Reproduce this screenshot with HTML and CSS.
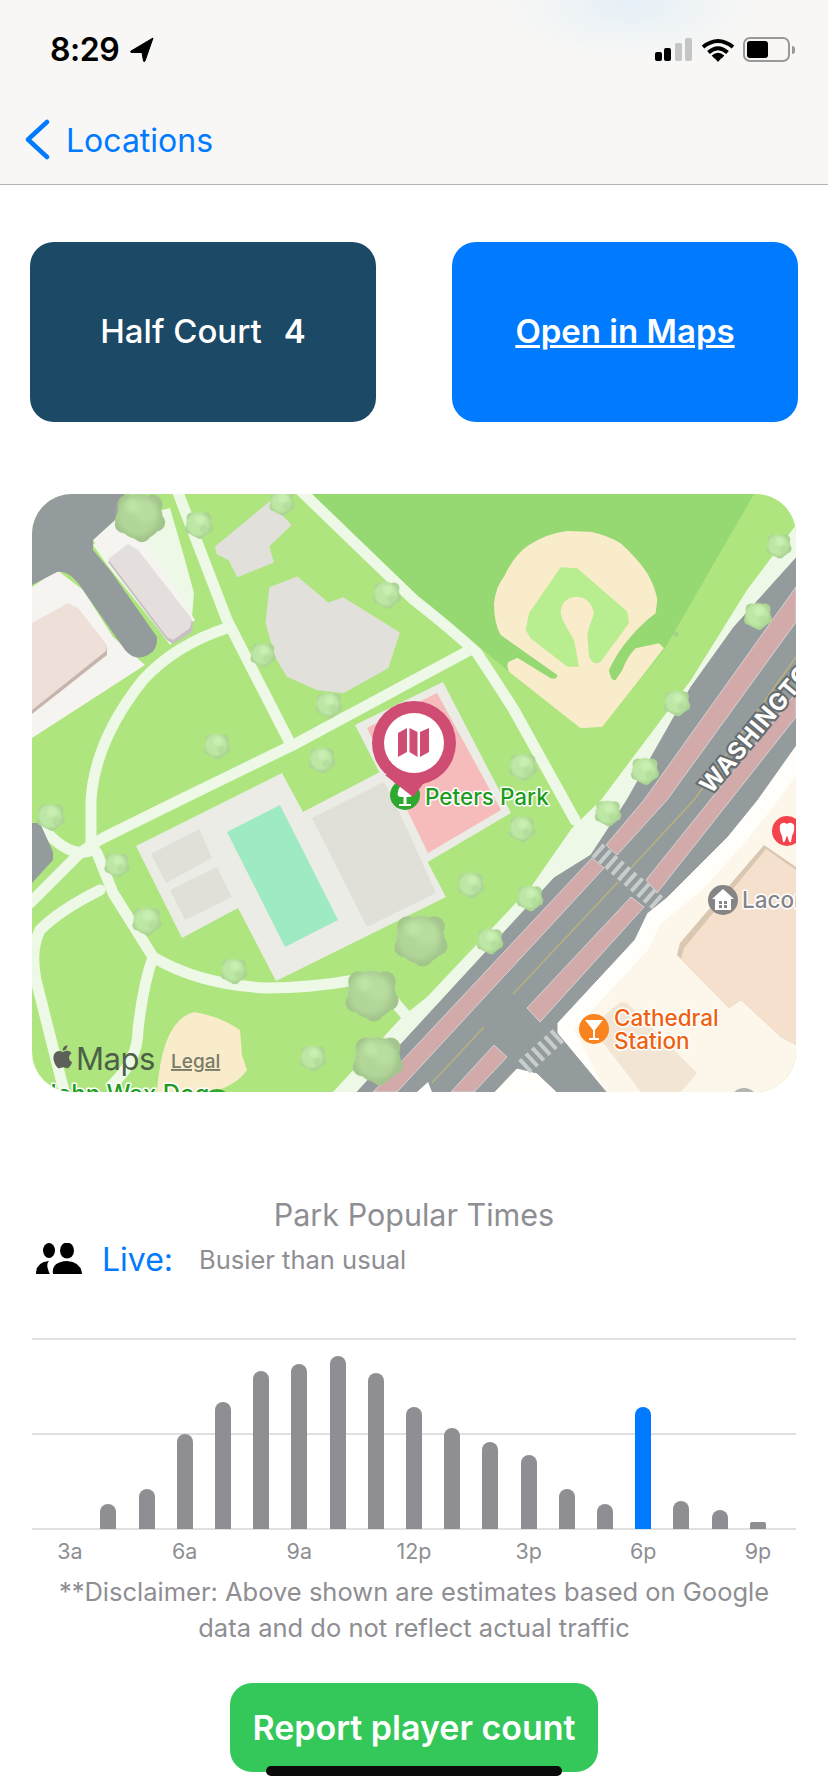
FILE: index.html
```html
<!DOCTYPE html>
<html>
	<head>
		<meta charset="UTF-8">
		<title>Peters Park</title>
		<link rel="stylesheet" href="styles.css">
	</head>
	<body>
		<div class="header">
			<div class="status">
				<span class="time">8:29</span>
				<svg class="arrow" width="26" height="26" viewBox="0 0 26 26"><path d="M24 1 L2 14 Q1 15.500 3 15.500 L13 15.500 L14.500 24 Q15 25.500 16 24 Z" fill="#000" stroke="#000" stroke-width="1" stroke-linejoin="round"/></svg>
				<div class="status-right">
					<svg width="38" height="24" viewBox="0 0 38 24">
						<rect x="0" y="14" width="7" height="9" rx="2" fill="#000"/>
						<rect x="9" y="10" width="7" height="13" rx="2" fill="#000"/>
						<rect x="20" y="5" width="7" height="18" rx="2" fill="#c3c5c6"/>
						<rect x="30" y="0" width="7" height="23" rx="2" fill="#c3c5c6"/>
					</svg>
					<svg width="34" height="25" viewBox="0 0 34 25" fill="none" stroke="#000" stroke-width="4">
						<path d="M2 9 Q17 -3 32 9"/>
						<path d="M7.500 14.500 Q17 6 26.500 14.500"/>
						<path d="M12 19 Q17 14.500 22 19"/>
						<path d="M17 24 L13.500 20 Q17 17.500 20.500 20 Z" fill="#000" stroke="none"/>
					</svg>
					<div class="battery"><div class="battery-fill"></div></div>
				</div>
			</div>
			<div class="nav">
				<svg width="28" height="42" viewBox="0 0 28 42"><path d="M23 3 L4 20.500 L23 38" fill="none" stroke="#007aff" stroke-width="4.500" stroke-linecap="round" stroke-linejoin="round"/></svg>
				<span class="nav-text">Locations</span>
			</div>
		</div>

		<div class="actions">
			<a class="btn btn-dark" href="#">Half Court<span class="count">4</span></a>
			<a class="btn btn-blue" href="#">Open in Maps</a>
		</div>

		<div class="map">
			<svg width="764" height="598" viewBox="32 494 764 598">
				<defs>
					<filter id="soft" x="-20%" y="-20%" width="140%" height="140%"><feGaussianBlur stdDeviation="1.300"/></filter>
					<g id="tree">
						<circle r="12.500" fill="#abd493"/>
						<circle cx="-7" cy="-7" r="5.500" fill="#abd493"/>
						<circle cx="7" cy="-7" r="5.500" fill="#abd493"/>
						<circle cx="9" cy="3" r="5" fill="#abd493"/>
						<circle cx="-9" cy="4" r="5" fill="#abd493"/>
						<circle cx="1" cy="9" r="5" fill="#abd493"/>
						<g filter="url(#soft)">
							<circle cx="-1" cy="-1" r="11.500" fill="#bde7a5"/>
							<circle cx="1" cy="-5" r="5" fill="#c9efb2"/>
							<circle cx="5" cy="4" r="4.500" fill="#b4de9c"/>
						</g>
					</g>
					<g id="tree-big">
						<circle r="12.500" fill="#a3c58d"/>
						<circle cx="-7" cy="-7" r="5.500" fill="#a3c58d"/>
						<circle cx="7" cy="-7" r="5.500" fill="#a3c58d"/>
						<circle cx="9" cy="3" r="5" fill="#a3c58d"/>
						<circle cx="-9" cy="4" r="5" fill="#a3c58d"/>
						<circle cx="1" cy="9" r="5" fill="#a3c58d"/>
						<g filter="url(#soft)">
							<circle cx="-1" cy="-1" r="11.500" fill="#b1d698"/>
							<circle cx="3" cy="-3" r="6" fill="#b7dd9f"/>
							<circle cx="-4" cy="-6" r="4" fill="#bde3a5"/>
						</g>
					</g>
				</defs>

				<rect x="32" y="494" width="764" height="598" fill="#aee57f"/>
				<polygon points="308,494 754,494 664,650 601,725 581,725 507,670 414,592" fill="#96d872"/>

				<!-- lot top left -->
				<polygon points="93,545 115,522 170,508 183,553 194,593 192,617 167,640 107,565" fill="#eef8e7"/>
				<polygon points="32,587 57,570 83,590 113,637 145,665 32,738" fill="#f6f4f0"/>
				<polygon points="93,540 115,520 140,535 195,620 170,645" fill="#f6f4f0"/>
				<path d="M32,494 H125 L115,520 L93,540 V550 L110,570 L157,637 Q158,650 148,655 Q135,662 125,650 L113,633 L83,590 Q70,570 57,572 L32,585 Z" fill="#949b9c"/>
				<polygon points="108,562 128,546 138,552 193,622 192,632 173,644 167,640" fill="#c8bfc0"/>
				<polygon points="108,559 128,544 138,550 192,619 190,628 173,640 167,637" fill="#e4dfdc"/>
				<polygon points="32,626 68,605 78,610 107,648 107,655 32,714" fill="#c5b5ad"/>
				<polygon points="32,623 68,603 78,608 107,645 106,651 32,710" fill="#eee0d9"/>

				<!-- paths -->
				<g fill="none" stroke="#eef8e7" stroke-width="11" stroke-linecap="round" stroke-linejoin="round">
					<path d="M177,490 L227,620 L290,743"/>
					<path d="M300,490 L414,600 Q450,628 477,653 Q495,680 514,710 L575,820"/>
					<path d="M470,650 L414,680 L297,743 L180,800 L105,837 Q90,845 78,855 L30,903"/>
					<path d="M91,845 L91,800 Q95,740 143,680 Q175,645 227,628"/>
					<path d="M91,845 L97,853 L113,893 L153,957 Q200,985 267,988 Q310,988 355,980"/>
					<path d="M93,850 Q70,860 43,828"/>
					<path d="M100,890 Q60,910 40,930 Q30,950 36,980 L65,1095"/>
					<path d="M153,957 Q143,985 138,1030 Q138,1060 112,1085"/>
					<path d="M380,985 L410,1020"/>
				</g>
				<polygon points="32,823 40,823 53,852 53,860 32,883" fill="#949b9c"/>

				<!-- buildings in the park -->
				<g transform="scale(.3333) translate(0 1440)" fill="#e2e0da">
					<polygon points="645,200 808,65 875,135 808,200 822,248 712,292 685,240 650,222"/>
					<polygon points="808,322 892,290 985,368 1030,352 1200,458 1165,565 1030,640 950,630 860,590 825,530 797,430"/>
				</g>
				<polygon points="136,846 282,773 303,812 380,772 446,897 276,981 238,908 182,938" fill="#ecece6"/>
				<polygon points="151,854 199,829 212,858 166,883" fill="#e0e0d8"/>
				<polygon points="170,890 217,867 232,897 185,920" fill="#e0e0d8"/>
				<polygon points="312,818 385,781 436,893 367,927" fill="#e0e0d8"/>
				<polygon points="227,832 280,805 338,920 285,947" fill="#9eeac2"/>
				<polygon points="355,725 443,682 511,813 426,863" fill="#ecece6"/>
				<polygon points="367,728 437,693 501,810 428,853" fill="#f6bcbc"/>
				<path d="M190,1092 Q195,1020 227,1012 Q250,1015 273,1030 L275,1055 L280,1070 Q270,1085 245,1092 Z" fill="#f9ecca" transform="translate(-33 0)"/>

				<!-- ball field -->
				<g transform="translate(414 480) scale(.3333)">
					<path d="M240,370 Q245,320 270,290 Q300,225 345,195 Q400,160 460,153 L530,155 Q580,165 620,190 Q670,235 700,280 Q725,325 730,360 L725,400 Q690,425 650,470 Q610,515 585,570 Q590,605 605,600 L625,570 Q640,530 665,505 L735,490 L750,505 L565,740 L500,745 L285,575 Q275,555 285,545 L310,533 L410,595 Q430,600 430,585 L260,465 Q240,430 240,370 Z" fill="#f9ecca"/>
					<path d="M440,262 L490,265 L640,395 L645,430 L560,545 Q540,560 525,530 L520,460 L540,400 Q530,350 485,350 Q440,355 440,400 Q445,425 480,480 L495,560 L460,560 L350,475 L335,450 L345,400 Z" fill="#b8ee90"/>
				</g>

				<!-- lot right of the road -->
				<polygon points="830,700 757,800 727,837 691,877 667,897 647,913 634,940 557,1023 557,1033 606,1130 830,1130" fill="#fcf7ea" stroke="#fffefa" stroke-width="34" stroke-linejoin="round"/>
				<polygon points="764,845 796,867 796,1045 781,1037 741,1000 729,1008 677,955 680,943" fill="#d9c7b2"/>
				<polygon points="766,849 796,870 796,1045 781,1037 741,1000 729,1008 681,959 684,948" fill="#f4e0cc"/>
				<polygon points="591,1027 621,1002 627,1003 697,1073 681,1092 641,1092" fill="#f3e5d3"/>
				<path d="M494,1092 L517,1068 L537,1073 L557,1092 Z" fill="#fffefa"/>

				<!-- road -->
				<polygon points="796,525 747,590 691,680 601,800 572,828 531,887 427,997 402,1017 333,1092 400,1092 796,600" fill="#eef8e7"/>
				<polygon points="796,558 734,627 691,687 627,800 591,855 554,878 414,1030 357,1092 494,1092 517,1068 537,1073 557,1092 606,1092 557,1033 557,1023 634,940 647,913 667,897 727,837 757,800 796,745" fill="#949b9c" stroke="#949b9c" stroke-linejoin="round"/>
				<g fill="#d2aaa9" stroke="#d4d4d4" stroke-width="1">
					<polygon points="796,587 796,622 667,800 617,855 606,845 644,800"/>
					<polygon points="592,858 604,868 397,1092 373,1092"/>
					<polygon points="796,693 796,717 657,893 646,880"/>
					<polygon points="631,897 644,907 540,1022 527,1008"/>
					<polygon points="494,1045 507,1057 474,1092 451,1092"/>
				</g>
				<g fill="none" stroke="#b9b27a" stroke-width="1.500">
					<path d="M796,657 L694,800 L631,868"/>
					<path d="M618,882 L513,994"/>
					<path d="M484,1027 L432,1083"/>
				</g>
				<path d="M597,850 L660,905" fill="none" stroke="#c9cccc" stroke-width="17" stroke-dasharray="4 4.500"/>
				<path d="M524,1067 L559,1035" fill="none" stroke="#c9cccc" stroke-width="17" stroke-dasharray="4 4.500"/>
				<polygon points="417,1092 428,1082 432,1092" fill="#fff"/>
				<text class="road-name" transform="translate(711 795) rotate(-50)">WASHINGTON</text>

				<!-- trees -->
				<use href="#tree-big" transform="translate(140 517) scale(1.800)"/>
				<use href="#tree" transform="translate(199 525)"/>
				<use href="#tree" transform="translate(282 503) scale(.9)"/>
				<use href="#tree" transform="translate(387 595)"/>
				<use href="#tree" transform="translate(263 655) scale(.9)"/>
				<use href="#tree" transform="translate(329 705) scale(.95)"/>
				<use href="#tree" transform="translate(217 746) scale(.95)"/>
				<use href="#tree" transform="translate(322 760) scale(.95)"/>
				<use href="#tree" transform="translate(779 546) scale(.9)"/>
				<use href="#tree" transform="translate(758 616)"/>
				<use href="#tree" transform="translate(677 703) scale(.95)"/>
				<use href="#tree" transform="translate(645 771)"/>
				<use href="#tree" transform="translate(523 767)"/>
				<use href="#tree" transform="translate(51 817)"/>
				<use href="#tree" transform="translate(117 865) scale(.9)"/>
				<use href="#tree" transform="translate(147 921) scale(1.050)"/>
				<use href="#tree" transform="translate(234 971) scale(.95)"/>
				<use href="#tree" transform="translate(313 1058) scale(.95)"/>
				<use href="#tree" transform="translate(608 813) scale(.95)"/>
				<use href="#tree" transform="translate(522 829) scale(.95)"/>
				<use href="#tree" transform="translate(471 885) scale(.95)"/>
				<use href="#tree" transform="translate(530 898) scale(.95)"/>
				<use href="#tree" transform="translate(490 941) scale(.95)"/>
				<use href="#tree-big" transform="translate(372 995) scale(1.900)"/>
				<use href="#tree-big" transform="translate(378 1060) scale(1.800)"/>
				<use href="#tree-big" transform="translate(421 940) scale(1.900)"/>
				<circle cx="676" cy="634" r="2.500" fill="#a7d08e"/>

				<!-- places -->
				<circle cx="405" cy="795" r="15" fill="#2ea82e"/>
				<path d="M405,785 Q412,786 412,792 Q414,797 408,797 L406.500,797 V804 H411 V806 H399 V804 H403.500 V797 H402 Q396,797 398,792 Q398,786 405,785 Z" fill="#fff"/>
				<text class="label label-green" x="425" y="805">Peters Park</text>

				<circle cx="594" cy="1029" r="15" fill="#f9831f"/>
				<path d="M585,1020 H603 L595,1030 V1038 H599 V1040 H589 V1038 H593 V1030 Z" fill="#fff"/>
				<text class="label label-orange" x="614" y="1026">Cathedral</text>
				<text class="label label-orange" x="614" y="1049">Station</text>

				<circle cx="723" cy="900" r="15" fill="#858585"/>
				<path d="M723,889 L734,899 H731 V910 H715 V899 H712 Z" fill="#fff"/>
				<path d="M719,901 h3 v3 h-3 z M724,901 h3 v3 h-3 z M719,905 h3 v3 h-3 z M724,905 h3 v3 h-3 z" fill="#858585"/>
				<text class="label label-gray" x="742" y="908">Laconia</text>

				<circle cx="787" cy="831" r="15" fill="#f4434d"/>
				<path d="M780,825 Q783,821 787,824 Q791,821 794,825 Q795,831 792,836 L791,842 Q789,843 788,838 Q787,834 786,838 Q785,843 783,842 L782,836 Q779,831 780,825 Z" fill="#fff"/>
				<circle cx="744" cy="1102" r="14" fill="#b5b5b5"/>

				<!-- clipped by the bottom edge -->
				<text class="label label-green label-big" x="43" y="1102">John Wax Dog</text>
				<circle cx="217" cy="1103" r="14" fill="#2ea82e"/>

				<!-- picked place -->
				<path d="M385,775 L413,797 L430,775 Z" fill="#cf4d72"/>
				<circle cx="414" cy="743" r="42" fill="#cf4d72"/>
				<circle cx="414" cy="743" r="30" fill="#fff"/>
				<path d="M398,733 L407,728 V752 L398,757 Z M409.500,728 L417.500,732 V757 L409.500,752 Z M420,732 L429,728 V752 L420,757 Z" fill="#cf4d72"/>

				<!-- maps badge -->
				<g transform="translate(49 1043) scale(1.150)">
					<path d="M18.710 19.500c-.83 1.240-1.710 2.450-3.050 2.470-1.340.03-1.770-.79-3.290-.79-1.530 0-2 .77-3.270.82-1.310.05-2.300-1.320-3.140-2.530C4.250 17 2.940 12.450 4.700 9.390c.87-1.520 2.430-2.480 4.120-2.510 1.280-.02 2.500.87 3.290.87.78 0 2.260-1.070 3.810-.91.65.03 2.470.26 3.640 1.980-.09.06-2.170 1.280-2.150 3.810.03 3.020 2.650 4.030 2.680 4.040-.03.07-.42 1.440-1.380 2.830M13 3.500c.73-.83 1.940-1.460 2.940-1.500.13 1.170-.34 2.350-1.040 3.190-.69.85-1.830 1.510-2.950 1.420-.15-1.150.41-2.350 1.050-3.110z" fill="#5c6058"/>
				</g>
				<text class="maps-word" x="76" y="1070">Maps</text>
				<text class="legal" x="171" y="1068">Legal</text>
			</svg>
		</div>

		<h2 class="title">Park Popular Times</h2>
		<div class="live">
			<svg width="46" height="32" viewBox="0 0 46 32">
				<ellipse cx="13" cy="7.500" rx="6" ry="7.500" fill="#000"/>
				<ellipse cx="31" cy="7.500" rx="7" ry="8" fill="#000"/>
				<path d="M0 31 Q0 19 13 18 Q9 22 14 31 Z" fill="#000"/>
				<path d="M17 31 Q15 19 31 18 Q45 19 46 31 Z" fill="#000"/>
			</svg>
			<span class="live-label">Live:</span>
			<span class="live-text">Busier than usual</span>
		</div>

		<div class="chart">
			<div class="col"></div>
			<div class="col"><div class="bar" style="height:25px"></div></div>
			<div class="col"><div class="bar" style="height:40px"></div></div>
			<div class="col"><div class="bar" style="height:95px"></div></div>
			<div class="col"><div class="bar" style="height:127px"></div></div>
			<div class="col"><div class="bar" style="height:158px"></div></div>
			<div class="col"><div class="bar" style="height:165px"></div></div>
			<div class="col"><div class="bar" style="height:173px"></div></div>
			<div class="col"><div class="bar" style="height:156px"></div></div>
			<div class="col"><div class="bar" style="height:122px"></div></div>
			<div class="col"><div class="bar" style="height:101px"></div></div>
			<div class="col"><div class="bar" style="height:87px"></div></div>
			<div class="col"><div class="bar" style="height:74px"></div></div>
			<div class="col"><div class="bar" style="height:40px"></div></div>
			<div class="col"><div class="bar" style="height:25px"></div></div>
			<div class="col"><div class="bar bar-now" style="height:122px"></div></div>
			<div class="col"><div class="bar" style="height:28px"></div></div>
			<div class="col"><div class="bar" style="height:19px"></div></div>
			<div class="col"><div class="bar bar-low" style="height:7px"></div></div>
		</div>
		<div class="ticks">
			<span>3a</span><span>6a</span><span>9a</span><span>12p</span><span>3p</span><span>6p</span><span>9p</span>
		</div>

		<p class="note">**Disclaimer: Above shown are estimates based on Google data and do not reflect actual traffic</p>

		<a class="report" href="#">Report player count</a>
		<div class="home-bar"></div>
	</body>
</html>
```

FILE: styles.css
```css
*{
	margin: 0;
	padding: 0;
	border: none;
	box-sizing: border-box;
}
html,body{
	width: 828px;
	height: 1792px;
	overflow: hidden;
}
body{
	position: relative;
	background: #fff;
	font-family: Inter, Roboto, "Liberation Sans", sans-serif;
}
a{
	display: flex;
	align-items: center;
	justify-content: center;
	color: #fff;
}

.header{
	height: 185px;
	border-bottom: 1px solid #b4b4b4;
	background: radial-gradient(ellipse 130px 55px at 630px 5px, #e6f0f7, rgba(233,241,247,0)), #f8f7f5;
}
.status{
	height: 100px;
	padding: 36px 38px 0 50px;
	display: flex;
	align-items: flex-start;
}
.time{
	font-size: 32px;
	line-height: 28px;
	font-weight: 600;
	color: #000;
	letter-spacing: -0.5px;
}
.arrow{
	margin: 1px 0 0 10px;
}
.status-right{
	margin-left: auto;
	display: flex;
	align-items: flex-start;
	gap: 8px;
	padding-top: 2px;
}
.battery{
	width: 47px;
	height: 25px;
	margin-top: -1px;
	border: 2px solid #999;
	border-radius: 7px;
	padding: 2px;
	position: relative;
}
.battery:after{
	content: "";
	position: absolute;
	right: -7px;
	top: 7px;
	width: 3px;
	height: 8px;
	background: #999;
	border-radius: 0 3px 3px 0;
}
.battery-fill{
	width: 21px;
	height: 17px;
	background: #000;
	border-radius: 3px;
}
.nav{
	display: flex;
	align-items: center;
	padding-left: 24px;
	height: 80px;
}
.nav-text{
	margin-left: 14px;
	font-size: 32px;
	color: #007aff;
}

.actions{
	display: flex;
	justify-content: space-between;
	margin-top: 57px;
	padding: 0 30px;
}
.btn{
	width: 346px;
	height: 180px;
	border-radius: 24px;
	font-size: 33px;
	font-weight: 500;
	text-decoration: none;
	padding-bottom: 2px;
}
.btn-dark{
	background: #1c4966;
}
.btn-blue{
	background: #007aff;
	font-weight: 600;
	text-decoration: underline;
}
.count{
	margin-left: 22px;
	font-weight: 600;
}

.map{
	width: 764px;
	height: 598px;
	margin: 72px 0 0 32px;
	border-radius: 40px;
	overflow: hidden;
}
.map svg{
	display: block;
}
.road-name{
	font-size: 24px;
	font-weight: 700;
	letter-spacing: 1px;
	fill: #fff;
	stroke: #666c6e;
	stroke-width: 4px;
	paint-order: stroke;
}
.label{
	font-size: 22.5px;
	font-weight: 500;
	stroke: #fff;
	stroke-width: 3px;
	paint-order: stroke;
	stroke-linejoin: round;
}
.label-big{
	font-size: 24px;
}
.label-green{
	fill: #1e9c1e;
}
.label-orange{
	fill: #ee610f;
}
.label-gray{
	fill: #85858a;
}
.maps-word{
	font-size: 31px;
	fill: #4d5f47;
	letter-spacing: -0.5px;
}
.legal{
	font-size: 19px;
	font-weight: 500;
	fill: #7a7a6a;
	text-decoration: underline;
}

.title{
	margin-top: 105px;
	font-size: 30.5px;
	line-height: 36px;
	font-weight: 400;
	text-align: center;
	color: #8e8e93;
}
.live{
	display: flex;
	align-items: center;
	height: 36px;
	margin-top: 8px;
	padding-left: 36px;
}
.live-label{
	margin-left: 20px;
	font-size: 32px;
	color: #007aff;
}
.live-text{
	margin-left: 26px;
	font-size: 25.500px;
	color: #8e8e93;
}

.chart{
	display: flex;
	align-items: flex-end;
	width: 764px;
	height: 192px;
	margin: 61px 0 0 32px;
	padding: 0 19px 1px;
	background: repeating-linear-gradient(to bottom, #e0e0e0 0, #e0e0e0 2px, transparent 2px, transparent 95px);
}
.col{
	flex: 1;
	display: flex;
	justify-content: center;
}
.bar{
	width: 16px;
	background: #8e8e93;
	border-radius: 8px 8px 0 0;
}
.bar-now{
	background: #007aff;
}
.bar-low{
	border-radius: 2px 2px 0 0;
}
.ticks{
	display: flex;
	justify-content: space-between;
	margin: 9px 0 0 51px;
	width: 726px;
}
.ticks span{
	width: 38px;
	text-align: center;
	font-size: 21.500px;
	line-height: 24px;
	color: #8e8e93;
}
.note{
	width: 730px;
	margin: 11px auto 0;
	font-size: 25.500px;
	line-height: 36px;
	text-align: center;
	color: #8e8e93;
}
.report{
	width: 368px;
	height: 89px;
	margin: 37px 0 0 230px;
	border-radius: 22px;
	background: #34c759;
	font-size: 34px;
	font-weight: 600;
	text-decoration: none;
}
.home-bar{
	position: absolute;
	left: 266px;
	top: 1766px;
	width: 296px;
	height: 10px;
	background: #0a0a0a;
	border-radius: 5px;
}
```
